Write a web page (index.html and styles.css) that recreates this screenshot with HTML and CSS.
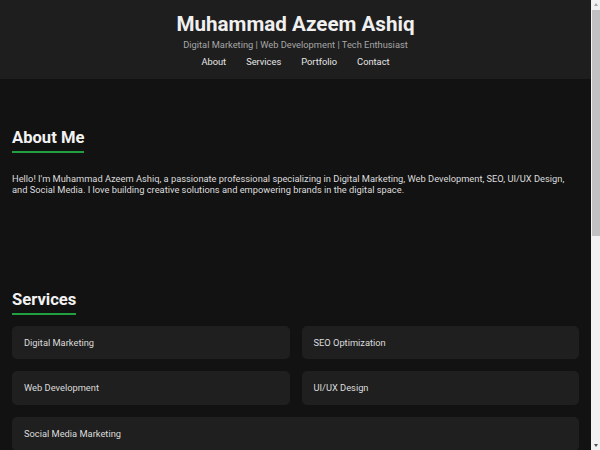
FILE: index.html
```html
<!DOCTYPE html>
<html>
<head>
<meta charset="utf-8">
<link rel="stylesheet" href="styles.css">
</head>
<body>
<div class="page">
<header class="site-header">
  <h1 class="title">Muhammad Azeem Ashiq</h1>
  <p class="tagline">Digital Marketing | Web Development | Tech Enthusiast</p>
  <nav class="nav">
    <a href="#about">About</a>
    <a href="#services">Services</a>
    <a href="#portfolio">Portfolio</a>
    <a href="#contact">Contact</a>
  </nav>
</header>
<main>
  <section class="section about" id="about">
    <h2 class="heading">About Me</h2>
    <p class="text">Hello! I'm Muhammad Azeem Ashiq, a passionate professional specializing in Digital Marketing, Web Development, SEO, UI/UX Design, and Social Media. I love building creative solutions and empowering brands in the digital space.</p>
  </section>
  <section class="section services" id="services">
    <h2 class="heading">Services</h2>
    <div class="cards">
      <div class="card">Digital Marketing</div>
      <div class="card">SEO Optimization</div>
      <div class="card">Web Development</div>
      <div class="card">UI/UX Design</div>
      <div class="card">Social Media Marketing</div>
    </div>
  </section>
  <section class="section portfolio" id="portfolio">
    <h2 class="heading">Portfolio</h2>
    <p class="text">Projects coming soon. Stay tuned for my latest work in web development, design and digital marketing.</p>
  </section>
  <section class="section contact" id="contact">
    <h2 class="heading">Contact</h2>
    <p class="text">Email: azeem@example.com</p>
  </section>
</main>
</div>
<div class="scrollbar" aria-hidden="true">
  <div class="sb-btn"><span class="arrow-up"></span></div>
  <div class="sb-track"><div class="sb-thumb"></div></div>
  <div class="sb-btn"><span class="arrow-down"></span></div>
</div>
</body>
</html>
```
FILE: styles.css
```css
* { box-sizing: border-box; }
html, body { margin: 0; padding: 0; }
body {
  background: #121212;
  color: #e0e0e0;
  font-family: Roboto, "Liberation Sans", sans-serif;
}
.page {
  margin-right: 9px;
}
.scrollbar {
  position: fixed;
  top: 0;
  right: 0;
  bottom: 0;
  width: 9px;
  background: #f1f1f1;
  display: flex;
  flex-direction: column;
}
.sb-btn {
  height: 9px;
  display: flex;
  align-items: center;
  justify-content: center;
}
.arrow-up {
  width: 0;
  height: 0;
  border-left: 2.5px solid transparent;
  border-right: 2.5px solid transparent;
  border-bottom: 3px solid #a3a3a3;
}
.arrow-down {
  width: 0;
  height: 0;
  border-left: 2.5px solid transparent;
  border-right: 2.5px solid transparent;
  border-top: 3px solid #505050;
}
.sb-track {
  flex: 1;
  padding: 1px 0 0 1px;
}
.sb-thumb {
  height: 226px;
  background: #c1c1c1;
}
.site-header {
  background: #1e1e1e;
  text-align: center;
  padding: 12px 12px 0;
  height: 79px;
}
.title {
  margin: 0;
  font-size: 20.6px;
  font-weight: 700;
  line-height: 24px;
  color: #f0f0f0;
}
.tagline {
  margin: 3px 0 0;
  font-size: 9.3px;
  line-height: 11.3px;
  color: #a6a6a6;
}
.nav {
  display: flex;
  justify-content: center;
  gap: 20px;
  margin-top: 6px;
}
.nav a {
  color: #e6e6e6;
  text-decoration: none;
  font-size: 9.3px;
  line-height: 11.3px;
}
.section {
  padding: 49px 12px 45px;
}
.heading {
  display: inline-block;
  margin: 0 0 11px;
  font-size: 16.6px;
  line-height: 20px;
  font-weight: 700;
  color: #f2f2f2;
  padding-bottom: 3px;
  border-bottom: 2px solid #22a03f;
}
.text {
  margin: 9px 0 0;
  font-size: 9.3px;
  line-height: 11.3px;
  color: #dcdcdc;
}
.cards {
  display: flex;
  flex-wrap: wrap;
  gap: 12px;
}
.card {
  flex: 1 1 40%;
  background: #1f1f1f;
  border-radius: 5px;
  padding: 11.2px 12px;
  font-size: 9.3px;
  line-height: 11.3px;
  color: #dcdcdc;
}
```
